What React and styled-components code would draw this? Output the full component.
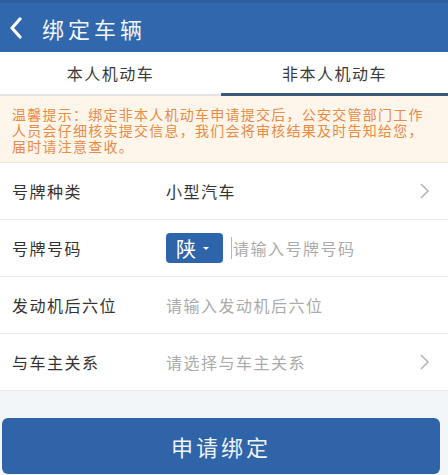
import React from "react";
import styled, { createGlobalStyle } from "styled-components";

const GlobalStyle = createGlobalStyle`
  body {
    margin: 0;
    background: #f3f6f9;
    font-family: "Noto Sans CJK SC", "Noto Sans", sans-serif;
  }
`;

const rows = [
  { label: "号牌种类", value: "小型汽车", arrow: true },
  { label: "号牌号码", plate: "陕", placeholder: "请输入号牌号码" },
  { label: "发动机后六位", placeholder: "请输入发动机后六位" },
  { label: "与车主关系", placeholder: "请选择与车主关系", arrow: true },
];

function App() {
  return (
    <Page>
      <GlobalStyle />
      <Header>
        <svg width="14" height="22" viewBox="0 0 14 22">
          <path
            d="M11 2 L3 11 L11 20"
            fill="none"
            stroke="#fff"
            strokeWidth="3.2"
            strokeLinecap="round"
            strokeLinejoin="round"
          />
        </svg>
        <h1>绑定车辆</h1>
      </Header>
      <Tabs>
        <Tab width="221px">本人机动车</Tab>
        <Tab active>非本人机动车</Tab>
      </Tabs>
      <Notice>
        温馨提示：绑定非本人机动车申请提交后，公安交管部门工作人员会仔细核实提交信息，我们会将审核结果及时告知给您，届时请注意查收。
      </Notice>
      <Form>
        {rows.map((r) => (
          <Row key={r.label}>
            <Label>{r.label}</Label>
            <Field>
              {r.plate && (
                <Plate>
                  {r.plate}
                  <span className="caret" />
                </Plate>
              )}
              {r.plate && <Cursor />}
              {r.value ? (
                <Value>{r.value}</Value>
              ) : (
                <Value muted>{r.placeholder}</Value>
              )}
            </Field>
            {r.arrow && (
              <svg width="12" height="18" viewBox="0 0 12 18">
                <path
                  d="M3 2 L10 9 L3 16"
                  fill="none"
                  stroke="#b5b5b5"
                  strokeWidth="1.6"
                />
              </svg>
            )}
          </Row>
        ))}
      </Form>
      <Footer>
        <SubmitButton>申请绑定</SubmitButton>
      </Footer>
    </Page>
  );
}

export default App;

const Page = styled.div`
  width: 448px;
  height: 475px;
  overflow: hidden;
  background: #f3f6f9;
`;

const Header = styled.div`
  height: 52px;
  background: #3067ad;
  border-top: 3px solid #2d5f9f;
  box-sizing: border-box;
  display: flex;
  align-items: center;
  padding-left: 9px;
  gap: 19px;
  h1 {
    margin: 0;
    color: #f2f6fc;
    font-size: 22px;
    font-weight: 400;
    letter-spacing: 4px;
  }
`;

const Tabs = styled.div`
  display: flex;
  background: #fff;
  height: 44px;
`;

const Tab = styled.div`
  flex: ${(p) => (p.width ? `0 0 ${p.width}` : "1")};
  display: flex;
  align-items: center;
  justify-content: center;
  font-size: 16px;
  letter-spacing: 1.5px;
  color: #3a3a3a;
  box-sizing: border-box;
  border-bottom: ${(p) => (p.active ? "3px solid #3d5a7c" : "2px solid #e4e4e4")};
  padding-top: ${(p) => (p.active ? "1px" : "0")};
`;

const Notice = styled.div`
  background: #fef6ea;
  color: #e98a45;
  font-size: 14px;
  letter-spacing: 1.25px;
  line-height: 16px;
  padding: 10px 12px 8px;
  border-bottom: 1px solid #efe6d6;
`;

const Form = styled.div`
  background: #fff;
`;

const Row = styled.div`
  height: 57px;
  display: flex;
  align-items: center;
  padding: 0 18px 0 12px;
  border-bottom: 1px solid #ebebeb;
  box-sizing: border-box;
`;

const Label = styled.div`
  width: 154px;
  font-size: 16px;
  letter-spacing: 1.5px;
  color: #333;
`;

const Field = styled.div`
  flex: 1;
  display: flex;
  align-items: center;
`;

const Value = styled.span`
  font-size: 16px;
  letter-spacing: 1.5px;
  color: ${(p) => (p.muted ? "#ababab" : "#333")};
`;

const Plate = styled.div`
  width: 57px;
  height: 30px;
  border-radius: 4px;
  background: #2e65aa;
  color: #fff;
  font-size: 20px;
  display: flex;
  align-items: center;
  justify-content: center;
  gap: 7px;
  padding-right: 4px;
  box-sizing: border-box;
  .caret {
    width: 0;
    height: 0;
    border-left: 3px solid transparent;
    border-right: 3px solid transparent;
    border-top: 3px solid #fff;
  }
`;

const Cursor = styled.div`
  width: 1px;
  height: 22px;
  background: #b8b8b8;
  margin: 0 1px 0 8px;
`;

const Footer = styled.div`
  padding: 27px 8px 0 2px;
`;

const SubmitButton = styled.button`
  width: 100%;
  height: 56px;
  border: none;
  border-radius: 6px;
  background: #2f65a8;
  color: #eef3fa;
  font-family: "Noto Sans CJK SC", "Noto Sans", sans-serif;
  font-size: 22px;
  letter-spacing: 3px;
`;
